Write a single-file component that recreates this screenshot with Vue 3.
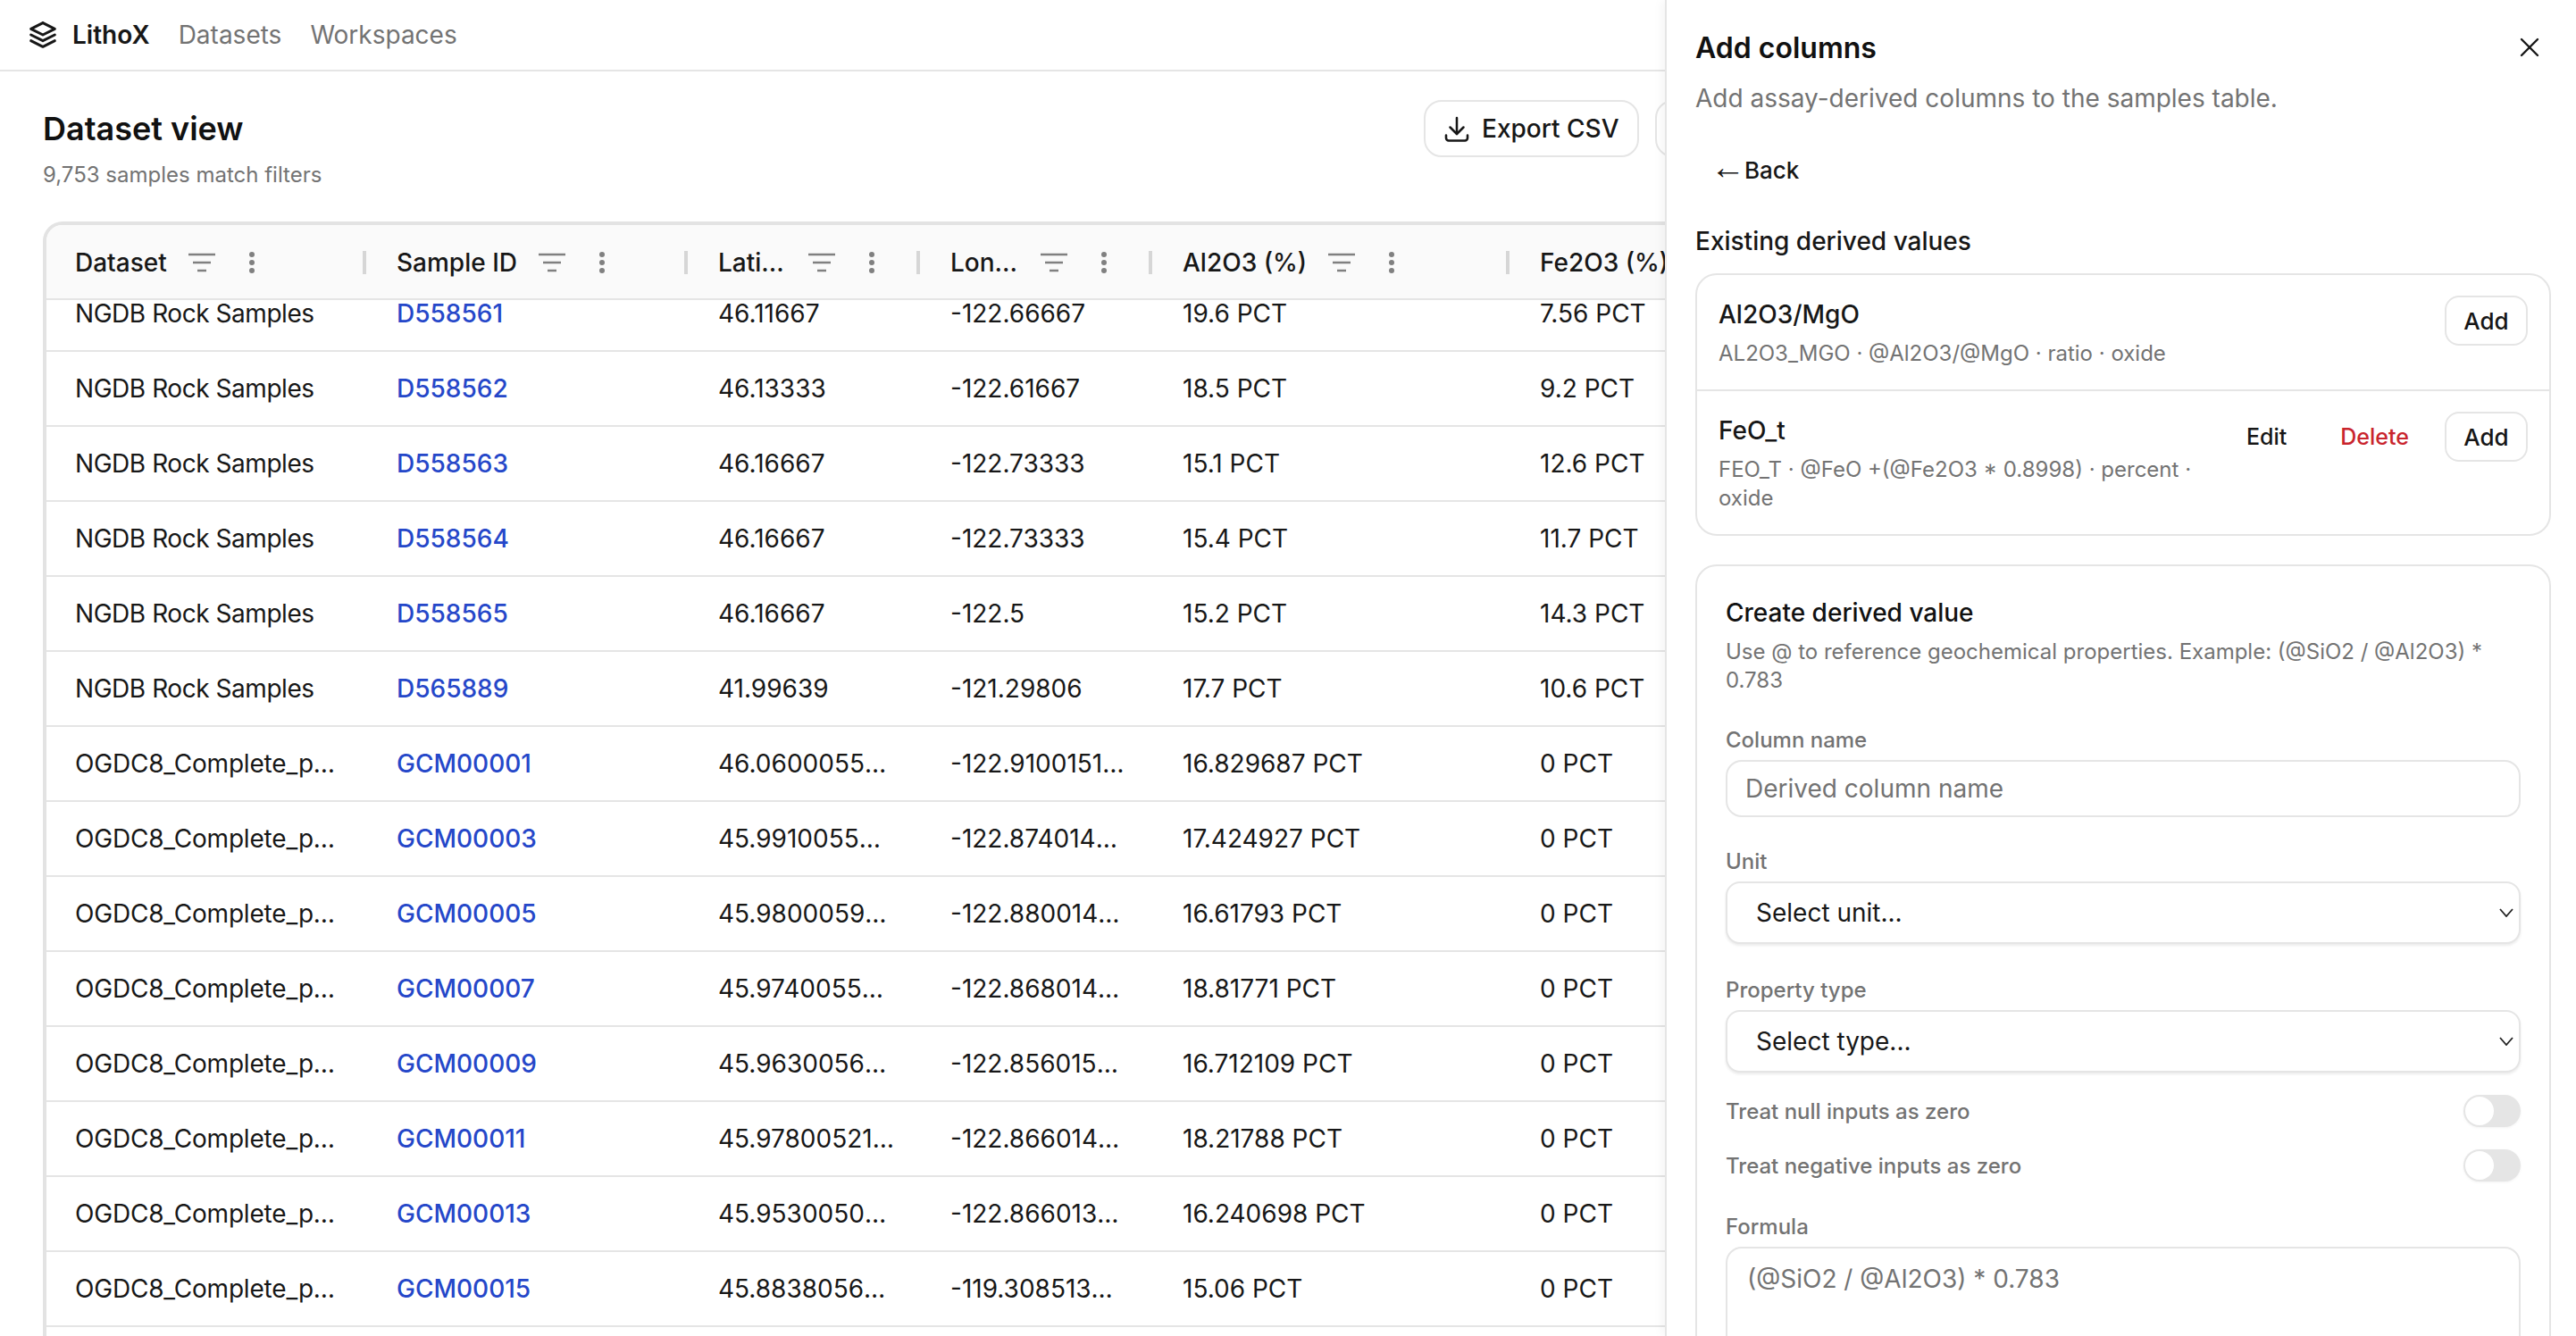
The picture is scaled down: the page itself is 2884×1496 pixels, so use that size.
<script setup>
const columns = [
  { key: 'dataset', label: 'Dataset' },
  { key: 'sample', label: 'Sample ID' },
  { key: 'lat', label: 'Latitude' },
  { key: 'lon', label: 'Longitude' },
  { key: 'al', label: 'Al2O3 (%)' },
  { key: 'fe', label: 'Fe2O3 (%)' },
]

const ngdb = 'NGDB Rock Samples'
const ogdc = 'OGDC8_Complete_public'

const rows = [
  { dataset: ngdb, sample: 'D558561', lat: '46.11667', lon: '-122.66667', al: '19.6 PCT', fe: '7.56 PCT' },
  { dataset: ngdb, sample: 'D558562', lat: '46.13333', lon: '-122.61667', al: '18.5 PCT', fe: '9.2 PCT' },
  { dataset: ngdb, sample: 'D558563', lat: '46.16667', lon: '-122.73333', al: '15.1 PCT', fe: '12.6 PCT' },
  { dataset: ngdb, sample: 'D558564', lat: '46.16667', lon: '-122.73333', al: '15.4 PCT', fe: '11.7 PCT' },
  { dataset: ngdb, sample: 'D558565', lat: '46.16667', lon: '-122.5', al: '15.2 PCT', fe: '14.3 PCT' },
  { dataset: ngdb, sample: 'D565889', lat: '41.99639', lon: '-121.29806', al: '17.7 PCT', fe: '10.6 PCT' },
  { dataset: ogdc, sample: 'GCM00001', lat: '46.06000550000001', lon: '-122.91001510000001', al: '16.829687 PCT', fe: '0 PCT' },
  { dataset: ogdc, sample: 'GCM00003', lat: '45.99100550000001', lon: '-122.87401400000001', al: '17.424927 PCT', fe: '0 PCT' },
  { dataset: ogdc, sample: 'GCM00005', lat: '45.98000590000001', lon: '-122.88001400000001', al: '16.61793 PCT', fe: '0 PCT' },
  { dataset: ogdc, sample: 'GCM00007', lat: '45.97400550000001', lon: '-122.86801400000001', al: '18.81771 PCT', fe: '0 PCT' },
  { dataset: ogdc, sample: 'GCM00009', lat: '45.96300560000001', lon: '-122.85601500000001', al: '16.712109 PCT', fe: '0 PCT' },
  { dataset: ogdc, sample: 'GCM00011', lat: '45.97800521000001', lon: '-122.86601400000001', al: '18.21788 PCT', fe: '0 PCT' },
  { dataset: ogdc, sample: 'GCM00013', lat: '45.95300500000001', lon: '-122.86601300000001', al: '16.240698 PCT', fe: '0 PCT' },
  { dataset: ogdc, sample: 'GCM00015', lat: '45.88380560000001', lon: '-119.30851300000001', al: '15.06 PCT', fe: '0 PCT' },
  { dataset: ogdc, sample: 'GCM00017', lat: '45.87000550000001', lon: '-119.30001300000001', al: '15.2 PCT', fe: '0 PCT' },
]
</script>

<template>
  <div class="app">
    <header class="topbar">
      <svg class="logo" viewBox="0 0 24 24" fill="none" stroke="currentColor" stroke-width="1.8" stroke-linecap="round" stroke-linejoin="round">
        <path d="M12 4l-8 4l8 4l8 -4l-8 -4" />
        <path d="M4 12l8 4l8 -4" />
        <path d="M4 16l8 4l8 -4" />
      </svg>
      <span class="brand">LithoX</span>
      <a class="nav-link">Datasets</a>
      <a class="nav-link">Workspaces</a>
    </header>

    <main class="content">
      <div class="page-head">
        <div class="page-title">
          <h1>Dataset view</h1>
          <p>9,753 samples match filters</p>
        </div>
        <div class="page-actions">
          <button class="btn-outline">
            <svg viewBox="0 0 24 24" fill="none" stroke="currentColor" stroke-width="1.7" stroke-linecap="round" stroke-linejoin="round">
              <path d="M4 17v2a2 2 0 0 0 2 2h12a2 2 0 0 0 2 -2v-2" />
              <path d="M7 11l5 5l5 -5" />
              <path d="M12 4l0 12" />
            </svg>
            Export CSV
          </button>
          <button class="btn-outline">Add columns</button>
        </div>
      </div>

      <div class="grid-frame">
        <div class="grid-row grid-head">
          <div v-for="col in columns" :key="col.key" class="hcell">
            <span class="hlabel">{{ col.label }}</span>
            <svg class="filter-icon" viewBox="0 0 30 22" fill="none" stroke="currentColor" stroke-width="2.6">
              <path d="M0 2h30M5 11h20M10 20h10" />
            </svg>
            <svg class="menu-icon" viewBox="0 0 12 24" fill="currentColor">
              <circle cx="6" cy="3" r="3" />
              <circle cx="6" cy="12" r="3" />
              <circle cx="6" cy="21" r="3" />
            </svg>
            <span class="resizer"></span>
          </div>
        </div>
        <div class="grid-body">
          <div class="grid-scroll">
            <div v-for="row in rows" :key="row.sample" class="grid-row data-row">
              <div
                v-for="col in columns"
                :key="col.key"
                class="cell"
                :class="{ link: col.key === 'sample', ngdb: row[col.key] === ngdb, ogdc: row[col.key] === ogdc }"
              >{{ row[col.key] }}</div>
            </div>
          </div>
        </div>
      </div>
    </main>

    <aside class="drawer">
      <div class="drawer-head">
        <h2>Add columns</h2>
        <svg class="close" viewBox="0 0 24 24" fill="none" stroke="currentColor" stroke-width="1.6" stroke-linecap="round" stroke-linejoin="round">
          <path d="M18 6l-12 12" />
          <path d="M6 6l12 12" />
        </svg>
      </div>
      <p class="drawer-sub">Add assay-derived columns to the samples table.</p>
      <button class="btn-ghost back"><span class="arrow">←</span> Back</button>

      <h3 class="section-title">Existing derived values</h3>
      <div class="card list-card">
        <div class="value-row">
          <div class="value-text">
            <div class="value-name">Al2O3/MgO</div>
            <div class="value-meta">AL2O3_MGO · @Al2O3/@MgO · ratio · oxide</div>
          </div>
          <div class="value-actions">
            <button class="btn-small">Add</button>
          </div>
        </div>
        <div class="value-row">
          <div class="value-text">
            <div class="value-name">FeO_t</div>
            <div class="value-meta">FEO_T · @FeO +(@Fe2O3 * 0.8998) · percent · oxide</div>
          </div>
          <div class="value-actions">
            <button class="btn-text">Edit</button>
            <button class="btn-text danger">Delete</button>
            <button class="btn-small">Add</button>
          </div>
        </div>
      </div>

      <div class="card form-card">
        <h4>Create derived value</h4>
        <p class="hint">Use @ to reference geochemical properties. Example: (@SiO2 / @Al2O3) * 0.783</p>

        <label class="field-label first">Column name</label>
        <input class="text-input" placeholder="Derived column name" />

        <label class="field-label after-input">Unit</label>
        <div class="select-wrap">
          <select><option>Select unit...</option></select>
          <svg viewBox="0 0 16 10" fill="none" stroke="currentColor" stroke-width="1.8"><path d="M1 1l7 8l7 -8" /></svg>
        </div>

        <label class="field-label after-select">Property type</label>
        <div class="select-wrap">
          <select><option>Select type...</option></select>
          <svg viewBox="0 0 16 10" fill="none" stroke="currentColor" stroke-width="1.8"><path d="M1 1l7 8l7 -8" /></svg>
        </div>

        <div class="switch-row">
          <span>Treat null inputs as zero</span>
          <span class="switch"><span class="knob"></span></span>
        </div>
        <div class="switch-row">
          <span>Treat negative inputs as zero</span>
          <span class="switch"><span class="knob"></span></span>
        </div>

        <label class="field-label after-switch">Formula</label>
        <textarea class="formula" placeholder="(@SiO2 / @Al2O3) * 0.783"></textarea>
      </div>
    </aside>
  </div>
</template>

<style>
html,
body {
  margin: 0;
  background: #fff;
  overflow: hidden;
}
</style>

<style scoped>
* {
  box-sizing: border-box;
}

.app {
  position: relative;
  width: 2884px;
  height: 1496px;
  overflow: hidden;
  display: flex;
  flex-direction: column;
  font-family: Inter, "Liberation Sans", sans-serif;
  font-size: 28px;
  color: #171717;
  background: #fff;
}

.topbar {
  flex: none;
  height: 80px;
  display: flex;
  align-items: center;
  padding-left: 28px;
  border-bottom: 2px solid #e5e5e5;
}

.logo {
  width: 40px;
  height: 40px;
  color: #171717;
}

.brand {
  margin-left: 13px;
  font-weight: 600;
  font-size: 28px;
}

.nav-link {
  margin-left: 32px;
  color: #737373;
}

.content {
  flex: 1;
  min-height: 0;
  padding: 32px 0 0 48px;
  display: flex;
  flex-direction: column;
}

.page-head {
  display: flex;
  align-items: flex-start;
}

.page-title {
  flex: 0 0 1546px;
  padding-top: 4px;
}

.page-title h1 {
  margin: 0;
  font-size: 36px;
  line-height: 56px;
  font-weight: 600;
  color: #111;
}

.page-title p {
  margin: 8px 0 0;
  font-size: 24px;
  line-height: 32px;
  color: #737373;
}

.page-actions {
  display: flex;
  gap: 18px;
}

.btn-outline {
  height: 64px;
  display: flex;
  align-items: center;
  gap: 10px;
  padding: 0 21px 0 17px;
  font: 500 28px Inter, sans-serif;
  color: #171717;
  background: #fff;
  border: 2px solid #e5e5e5;
  border-radius: 20px;
  white-space: nowrap;
}

.btn-outline svg {
  width: 36px;
  height: 36px;
}

.grid-frame {
  margin-top: 36px;
  flex: 1;
  min-height: 0;
  width: 2836px;
  border: solid #e3e3e3;
  border-width: 4px 4px 0 4px;
  border-radius: 22px 22px 0 0;
  display: flex;
  flex-direction: column;
  overflow: hidden;
}

.grid-row {
  display: grid;
  grid-template-columns: 360px 360px 260px 260px 400px 400px;
}

.grid-head {
  flex: none;
  height: 84px;
  background: #fafafa;
  border-bottom: 2px solid #e5e5e5;
}

.hcell {
  display: flex;
  align-items: center;
  min-width: 0;
  padding: 2px 2px 0 32px;
  font-weight: 500;
}

.hlabel {
  flex: 0 1 auto;
  min-width: 0;
  overflow: hidden;
  white-space: nowrap;
  text-overflow: ellipsis;
}

.filter-icon {
  flex: none;
  width: 30px;
  height: 22px;
  margin-left: 24px;
  color: #808080;
}

.menu-icon {
  flex: none;
  width: 12px;
  height: 24px;
  margin-left: 35px;
  margin-right: 44px;
  color: #808080;
}

.resizer {
  flex: none;
  width: 4px;
  height: 26px;
  margin-left: auto;
  background: #d6d6d6;
}

.grid-body {
  flex: 1;
  min-height: 0;
  overflow: hidden;
}

.grid-scroll {
  margin-top: -26px;
}

.data-row {
  height: 84px;
  border-bottom: 2px solid #e5e5e5;
}

.cell {
  padding: 0 30px 0 32px;
  line-height: 82px;
  overflow: hidden;
  white-space: nowrap;
  text-overflow: ellipsis;
  color: #171717;
}

.cell.ngdb {
  letter-spacing: -0.45px;
}

.cell.ogdc {
  letter-spacing: -0.2px;
}

.cell.link {
  color: #2547c9;
  font-weight: 500;
}

.drawer {
  position: absolute;
  top: 0;
  right: 0;
  bottom: 0;
  width: 1020px;
  padding: 31px 28px 0 32px;
  background: #fff;
  border-left: 2px solid #e5e5e5;
  box-shadow: -4px 0 10px rgba(0, 0, 0, 0.04);
  overflow: hidden;
}

.drawer-head {
  display: flex;
  align-items: center;
  justify-content: space-between;
  height: 44px;
}

.drawer-head h2 {
  margin: 0;
  font-size: 32px;
  font-weight: 600;
  color: #111;
}

.close {
  width: 36px;
  height: 36px;
  margin-right: 6px;
  color: #171717;
}

.drawer-sub {
  margin: 15px 0 0;
  line-height: 40px;
  color: #737373;
}

.btn-ghost {
  display: block;
  height: 56px;
  margin-top: 32px;
  padding: 0 22px 0 17px;
  font: 500 26px Inter, sans-serif;
  color: #171717;
  background: none;
  border: 0;
}

.arrow {
  margin-right: -8px;
  font-family: "Liberation Sans", sans-serif;
  font-size: 39px;
  font-weight: 400;
  line-height: 0;
}

.section-title {
  margin: 34px 0 18px;
  font-size: 28px;
  line-height: 36px;
  font-weight: 500;
  color: #171717;
}

.card {
  border: 2px solid #e5e5e5;
  border-radius: 24px;
  background: #fff;
}

.value-row {
  display: flex;
  align-items: flex-start;
  gap: 20px;
  padding: 24px;
}

.value-row + .value-row {
  border-top: 2px solid #e5e5e5;
}

.value-text {
  flex: 1;
  min-width: 0;
}

.value-name {
  font-weight: 500;
  line-height: 40px;
}

.value-meta {
  margin-top: 8px;
  font-size: 24px;
  line-height: 32px;
  color: #737373;
}

.value-actions {
  flex: none;
  display: flex;
  align-items: center;
  margin-top: -1px;
}

.btn-small {
  width: 93px;
  height: 56px;
  padding: 0;
  font: 500 26px Inter, sans-serif;
  color: #171717;
  background: #fff;
  border: 2px solid #e5e5e5;
  border-radius: 16px;
}

.btn-text {
  height: 56px;
  padding: 0 20px;
  margin-right: 20px;
  font: 500 25px Inter, sans-serif;
  color: #171717;
  background: none;
  border: 0;
}

.btn-text.danger {
  color: #c9252d;
}

.form-card {
  margin-top: 32px;
  padding: 32px;
  height: 1000px;
}

.form-card h4 {
  margin: 0;
  font-size: 28px;
  line-height: 40px;
  font-weight: 500;
  color: #111;
}

.hint {
  margin: 8px 0 0;
  font-size: 24px;
  line-height: 32px;
  color: #737373;
}

.field-label {
  display: block;
  margin-bottom: 6px;
  font-size: 24px;
  line-height: 32px;
  font-weight: 500;
  color: #737373;
}

.field-label.first {
  margin-top: 35px;
}

.field-label.after-input {
  margin-top: 34px;
}

.field-label.after-select {
  margin-top: 36px;
}

.field-label.after-switch {
  margin-top: 35px;
}

.text-input,
.formula {
  display: block;
  width: 100%;
  font: 28px Inter, sans-serif;
  color: #171717;
  background: #fff;
  border: 2px solid #e5e5e5;
  border-radius: 18px;
  outline: none;
}

.text-input {
  height: 64px;
  padding: 0 20px;
}

.formula {
  height: 200px;
  padding: 14px 22px;
  line-height: 40px;
  resize: none;
}

.text-input::placeholder,
.formula::placeholder {
  color: #737373;
  opacity: 1;
}

.select-wrap {
  position: relative;
  height: 70px;
}

.select-wrap select {
  display: block;
  width: 100%;
  height: 100%;
  padding: 0 32px;
  appearance: none;
  font: 28px Inter, sans-serif;
  color: #171717;
  background: #fff;
  border: 2px solid #e5e5e5;
  border-radius: 16px;
  box-shadow: 0 2px 3px rgba(0, 0, 0, 0.08);
}

.select-wrap svg {
  position: absolute;
  top: 30px;
  right: 8px;
  width: 16px;
  height: 10px;
  color: #222;
  pointer-events: none;
}

.switch-row {
  display: flex;
  align-items: center;
  justify-content: space-between;
  height: 36px;
  margin-top: 25px;
  font-size: 24px;
  font-weight: 500;
  color: #737373;
}

.switch {
  display: block;
  width: 64px;
  height: 36px;
  padding: 2px;
  border-radius: 18px;
  background: #e5e5e5;
  box-shadow: 0 1px 3px rgba(0, 0, 0, 0.05);
}

.knob {
  display: block;
  width: 32px;
  height: 32px;
  border-radius: 50%;
  background: #fff;
}
</style>
